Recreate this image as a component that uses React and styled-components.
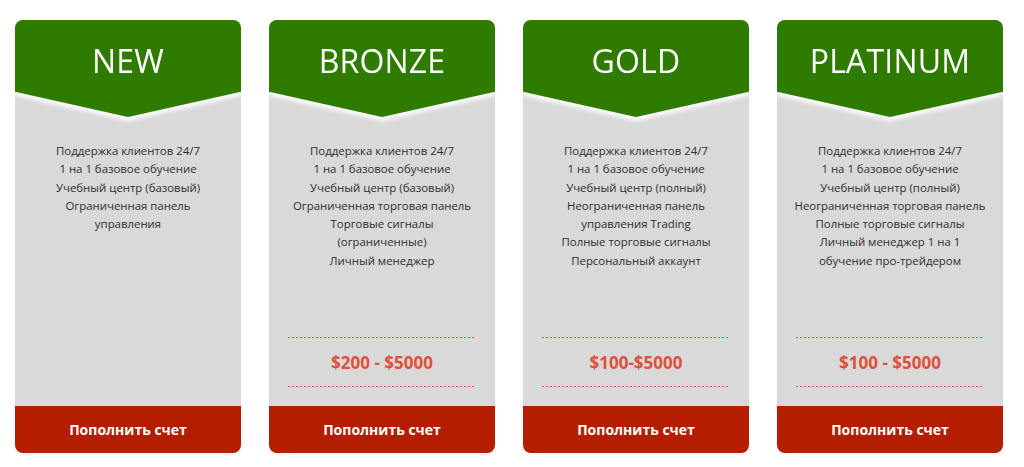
import React from "react";
import styled, { createGlobalStyle } from "styled-components";

const GlobalStyle = createGlobalStyle`
  html, body {
    margin: 0;
    padding: 0;
    background: #ffffff;
    font-family: "Open Sans", "Noto Sans", sans-serif;
  }
`;

const Page = styled.div`
  display: grid;
  grid-template-columns: repeat(4, 226px);
  column-gap: 28px;
  padding: 20px 15px 0;
`;

const Card = styled.div`
  display: flex;
  flex-direction: column;
  height: 433px;
  background: #d9d9d9;
  border-radius: 8px;
  overflow: hidden;
`;

const HeaderWrap = styled.div`
  height: 97px;
  filter: drop-shadow(0 4px 2px rgba(255, 255, 255, 0.9));
`;

const Header = styled.div`
  height: 100%;
  background: #2e7b00;
  clip-path: polygon(0 0, 100% 0, 100% 74%, 50% 100%, 0 74%);
  display: flex;
  justify-content: center;
  padding-top: 19px;
  box-sizing: border-box;
`;

const Title = styled.h2`
  margin: 0;
  color: #ffffff;
  font-weight: 400;
  font-size: 32px;
  line-height: 44px;
  letter-spacing: 0.2px;
`;

const Features = styled.ul`
  flex: 1;
  list-style: none;
  margin: 0;
  padding: 25px 8px 0;
  text-align: center;
  color: #2e2e2e;
  font-size: 11.4px;
  line-height: 18.3px;
`;

const dash = "repeating-linear-gradient(90deg, #e2593f 0 2px, transparent 2px 4px)";

const Price = styled.div`
  margin: 0 19px 19px;
  height: 50px;
  background-image: ${dash}, ${dash};
  background-size: 100% 1px;
  background-position: top, bottom;
  background-repeat: no-repeat;
  display: flex;
  align-items: center;
  justify-content: center;
  color: #e0503a;
  font-weight: 700;
  font-size: 17px;
`;

const Button = styled.button`
  height: 47px;
  border: none;
  background: #b51d00;
  color: #ffffff;
  font-family: inherit;
  font-weight: 700;
  font-size: 14px;
  cursor: pointer;
`;

const plans = [
  {
    name: "NEW",
    features: [
      "Поддержка клиентов 24/7",
      "1 на 1 базовое обучение",
      "Учебный центр (базовый)",
      "Ограниченная панель",
      "управления",
    ],
  },
  {
    name: "BRONZE",
    price: "$200 - $5000",
    features: [
      "Поддержка клиентов 24/7",
      "1 на 1 базовое обучение",
      "Учебный центр (базовый)",
      "Ограниченная торговая панель",
      "Торговые сигналы",
      "(ограниченные)",
      "Личный менеджер",
    ],
  },
  {
    name: "GOLD",
    price: "$100-$5000",
    features: [
      "Поддержка клиентов 24/7",
      "1 на 1 базовое обучение",
      "Учебный центр (полный)",
      "Неограниченная панель",
      "управления Trading",
      "Полные торговые сигналы",
      "Персональный аккаунт",
    ],
  },
  {
    name: "PLATINUM",
    price: "$100 - $5000",
    features: [
      "Поддержка клиентов 24/7",
      "1 на 1 базовое обучение",
      "Учебный центр (полный)",
      "Неограниченная торговая панель",
      "Полные торговые сигналы",
      "Личный менеджер 1 на 1",
      "обучение про-трейдером",
    ],
  },
];

export default function App() {
  return (
    <>
      <GlobalStyle />
      <Page>
        {plans.map((plan) => (
          <Card key={plan.name}>
            <HeaderWrap>
              <Header>
                <Title>{plan.name}</Title>
              </Header>
            </HeaderWrap>
            <Features>
              {plan.features.map((f) => (
                <li key={f}>{f}</li>
              ))}
            </Features>
            {plan.price && <Price>{plan.price}</Price>}
            <Button>Пополнить счет</Button>
          </Card>
        ))}
      </Page>
    </>
  );
}
